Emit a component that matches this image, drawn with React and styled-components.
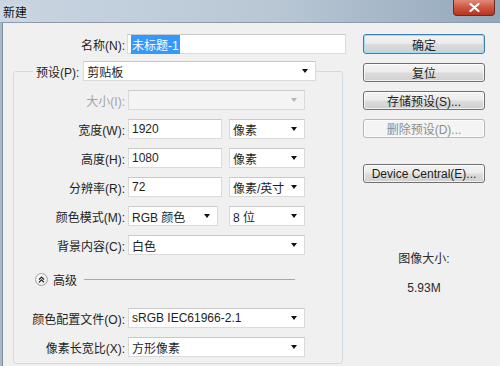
import React from 'react'
import styled, { createGlobalStyle } from 'styled-components'

const GlobalStyle = createGlobalStyle`
  html, body {
    margin: 0;
    padding: 0;
    background: #f0f0f0;
  }
  body {
    font-family: "Liberation Sans", "Noto Sans CJK SC", sans-serif;
    font-size: 12px;
    color: #1e1e1e;
  }
`

const Window = styled.div`
  width: 500px;
  height: 366px;
  display: flex;
  flex-direction: column;
  overflow: hidden;
`

const TitleBar = styled.div`
  height: 22px;
  flex: none;
  display: flex;
  justify-content: space-between;
  align-items: flex-start;
  background: linear-gradient(to right, #c9d5e1 0%, #b9c7d5 55%, #93a7bb 100%);
`

const Title = styled.div`
  padding: 3px 0 0 3px;
  font-size: 12px;
  color: #111;
  text-shadow: 0 0 6px rgba(255, 255, 255, 0.9);
`

const CloseButton = styled.div`
  width: 42px;
  height: 16px;
  margin-right: 5px;
  box-sizing: border-box;
  border: 1px solid #6f2a1f;
  border-top: none;
  border-radius: 0 0 4px 4px;
  background: linear-gradient(to bottom, #e08a78 0%, #cf5a44 45%, #b8331f 100%);
  display: flex;
  align-items: center;
  justify-content: center;
`

const Body = styled.div`
  flex: 1;
  display: flex;
  border-top: 1px solid #8c9aa9;
  border-left: 2px solid #a9b9c9;
  box-shadow: inset 1px 0 0 #7d8c9b;
  background: #f0f0f0;
`

const LeftPanel = styled.div`
  width: 337px;
  padding: 11px 0 0 11px;
  display: flex;
  flex-direction: column;
`

const NameRow = styled.div`
  display: grid;
  grid-template-columns: 112px 219px;
  column-gap: 2px;
  align-items: center;
  height: 20px;
`

const Label = styled.span`
  text-align: right;
  white-space: nowrap;
  color: ${p => (p.$disabled ? '#a3a3a3' : '#1e1e1e')};
`

const Field = styled.div`
  box-sizing: border-box;
  width: ${p => p.$w}px;
  height: 20px;
  border: 1px solid #dadada;
  border-top-color: #c9c9c9;
  background: ${p => (p.$disabled ? '#f4f4f4' : '#fff')};
  display: flex;
  align-items: center;
  justify-content: space-between;
  padding: 0 7px 0 3px;
  white-space: nowrap;
`

const Selected = styled.span`
  background: #3399ff;
  color: #fff;
  padding: 1px 1px;
`

const Arrow = styled.span`
  width: 0;
  height: 0;
  border-left: 3.5px solid transparent;
  border-right: 3.5px solid transparent;
  border-top: 4px solid ${p => (p.$disabled ? '#b5b5b5' : '#111')};
`

const Group = styled.fieldset`
  margin: 7px 0 0 0;
  width: 330px;
  box-sizing: border-box;
  border: 1px solid #d3dbe2;
  border-radius: 3px;
  padding: 0 0 6px 0;
`

const Legend = styled.legend`
  margin-left: 19px;
  padding: 0 0 0 3px;
  display: flex;
  align-items: center;
  gap: 4px;
`

const Rows = styled.div`
  display: grid;
  grid-template-columns: 111px auto;
  column-gap: 3px;
  row-gap: 9px;
  margin-top: 9px;
  align-items: center;
`

const Controls = styled.div`
  display: flex;
  gap: ${p => p.$gap || 7}px;
`

const AdvancedRow = styled.div`
  grid-column: 1 / 3;
  display: flex;
  align-items: center;
  height: 14px;
  margin: 8px 0 13px 21px;
  gap: 5px;
`

const Toggle = styled.span`
  width: 13px;
  height: 13px;
  box-sizing: border-box;
  border-radius: 50%;
  border: 1px solid #a4a4a4;
  background: radial-gradient(circle at 40% 35%, #ffffff 0%, #eaeaea 70%, #d6d6d6 100%);
  display: flex;
  align-items: center;
  justify-content: center;
`

const Rule = styled.span`
  flex: none;
  width: 211px;
  height: 1px;
  margin-left: 2px;
  background: #a8a8a8;
`

const RightPanel = styled.div`
  width: 122px;
  padding: 11px 0 0 13px;
  display: flex;
  flex-direction: column;
`

const Button = styled.div`
  box-sizing: border-box;
  height: ${p => (p.$default ? 20 : 19)}px;
  margin-bottom: ${p => p.$after ?? 9}px;
  border: 1px solid ${p => (p.$disabled ? '#b4b8bc' : p.$default ? '#3c7fb1' : '#707070')};
  border-radius: 3px;
  background: ${p =>
    p.$disabled
      ? '#f4f4f4'
      : 'linear-gradient(to bottom, #f4f4f4 0%, #ebebeb 48%, #dcdcdc 52%, #d0d0d0 100%)'};
  box-shadow: ${p => (p.$default ? 'inset 0 0 0 1px #9fdcf6' : 'inset 0 0 0 1px rgba(255,255,255,0.7)')};
  color: ${p => (p.$disabled ? '#8d8d8d' : '#1e1e1e')};
  display: flex;
  align-items: center;
  justify-content: center;
  white-space: nowrap;
`

const SizeInfo = styled.div`
  margin-top: 57px;
  display: flex;
  flex-direction: column;
  align-items: center;
  gap: 15px;
  color: #2a2a2a;
`

function Select({ w, value, disabled }) {
  return (
    <Field $w={w} $disabled={disabled}>
      <span>{value}</span>
      <Arrow $disabled={disabled} />
    </Field>
  )
}

function Input({ w, value }) {
  return (
    <Field $w={w}>
      <span>{value}</span>
    </Field>
  )
}

export default function App() {
  return (
    <>
      <GlobalStyle />
      <Window>
        <TitleBar>
          <Title>新建</Title>
          <CloseButton>
            <svg width="11" height="9" viewBox="0 0 11 9">
              <path d="M1.5 1 L9.5 8 M9.5 1 L1.5 8" stroke="#fff" strokeWidth="2.2" strokeLinecap="round" />
            </svg>
          </CloseButton>
        </TitleBar>
        <Body>
          <LeftPanel>
            <NameRow>
              <Label>名称(N):</Label>
              <Field $w={219}>
                <Selected>未标题-1</Selected>
              </Field>
            </NameRow>
            <Group>
              <Legend>
                <Label>预设(P):</Label>
                <Select w={233} value="剪贴板" />
              </Legend>
              <Rows>
                <Label $disabled>大小(I):</Label>
                <Select w={177} value="" disabled />

                <Label>宽度(W):</Label>
                <Controls>
                  <Input w={94} value="1920" />
                  <Select w={76} value="像素" />
                </Controls>

                <Label>高度(H):</Label>
                <Controls>
                  <Input w={94} value="1080" />
                  <Select w={76} value="像素" />
                </Controls>

                <Label>分辨率(R):</Label>
                <Controls>
                  <Input w={94} value="72" />
                  <Select w={76} value="像素/英寸" />
                </Controls>

                <Label>颜色模式(M):</Label>
                <Controls $gap={11}>
                  <Select w={90} value="RGB 颜色" />
                  <Select w={76} value="8 位" />
                </Controls>

                <Label>背景内容(C):</Label>
                <Select w={177} value="白色" />

                <AdvancedRow>
                  <Toggle>
                    <svg width="7" height="7" viewBox="0 0 7 7">
                      <path d="M1 3.5 L3.5 1 L6 3.5 M1 6.3 L3.5 3.8 L6 6.3" fill="none" stroke="#222" strokeWidth="1.2" />
                    </svg>
                  </Toggle>
                  <span>高级</span>
                  <Rule />
                </AdvancedRow>

                <Label>颜色配置文件(O):</Label>
                <Select w={177} value="sRGB IEC61966-2.1" />

                <Label>像素长宽比(X):</Label>
                <Select w={177} value="方形像素" />
              </Rows>
            </Group>
          </LeftPanel>
          <RightPanel>
            <Button $default>确定</Button>
            <Button>复位</Button>
            <Button>存储预设(S)...</Button>
            <Button $disabled $after={26}>删除预设(D)...</Button>
            <Button>Device Central(E)...</Button>
            <SizeInfo>
              <span>图像大小:</span>
              <span>5.93M</span>
            </SizeInfo>
          </RightPanel>
        </Body>
      </Window>
    </>
  )
}
